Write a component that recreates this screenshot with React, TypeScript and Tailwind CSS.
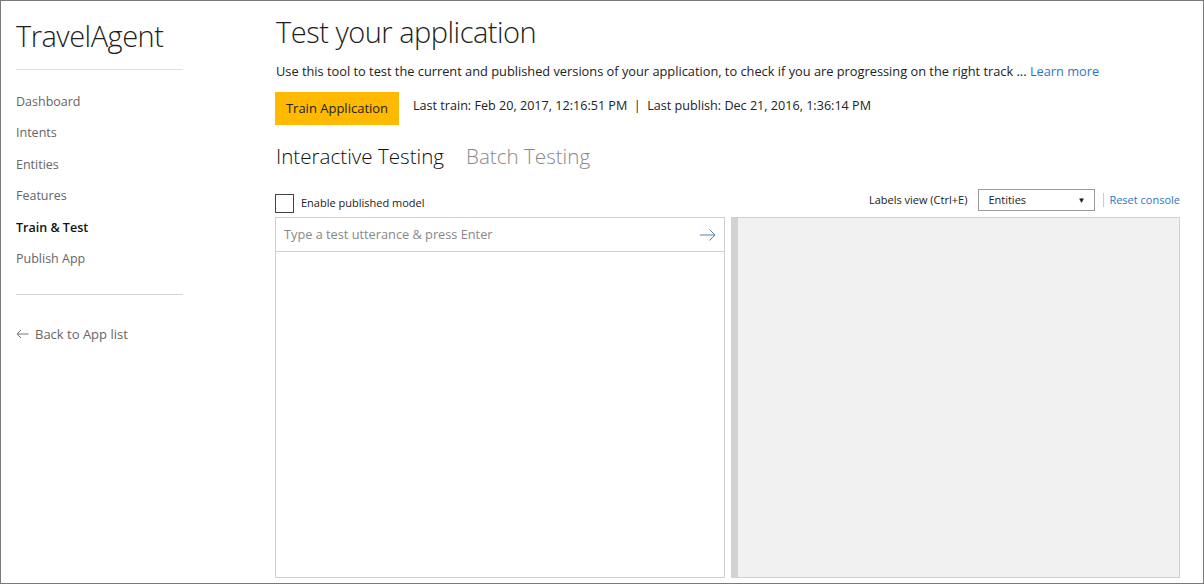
import { useState } from "react";

const navItems = ["Dashboard", "Intents", "Entities", "Features", "Train & Test", "Publish App"];

function Sidebar() {
  return (
    <aside className="w-[275px] shrink-0 pl-[15px]">
      <div className="w-[167px]">
        <h1 className="pt-[15px] h-[68px] text-[29px] font-light leading-[40px] text-[#1e1e1e] tracking-[-0.5px]">
          TravelAgent
        </h1>
        <div className="border-t border-[#e1e1e1]" />
        <nav className="pt-[22px] pb-[14px] flex flex-col">
          {navItems.map((item) => (
            <a
              key={item}
              className={
                item === "Train & Test"
                  ? "h-[31.4px] leading-[20px] text-[12.5px] font-semibold text-[#111]"
                  : "h-[31.4px] leading-[20px] text-[12.5px] text-[#666]"
              }
            >
              {item}
            </a>
          ))}
        </nav>
        <div className="border-t border-[#d4d4d4]" />
        <a className="mt-[29px] flex items-center gap-[6px] text-[13px] text-[#666] leading-[20px]">
          <svg width="13" height="10" viewBox="0 0 13 10" fill="none" stroke="#777" strokeWidth="1">
            <path d="M12.5 5H1M5 1L1 5l4 4" />
          </svg>
          Back to App list
        </a>
      </div>
    </aside>
  );
}

function Toolbar() {
  const [checked, setChecked] = useState(false);
  return (
    <div className="flex items-end justify-between h-[46px] pb-[4px] pr-[23px] -ml-px">
      <label className="flex items-center gap-[7px] text-[11px] text-[#222]">
        <span
          onClick={() => setChecked(!checked)}
          className="w-[19px] h-[19px] border border-[#444] bg-white"
        />
        Enable published model
      </label>
      <div className="flex items-center text-[11px] text-[#222] mb-[2px]">
        <span className="mr-[11px]">Labels view (Ctrl+E)</span>
        <div className="w-[117px] h-[22px] border border-[#999] flex items-center justify-between px-[9px] text-[11px]">
          <span>Entities</span>
          <span className="text-[8px]">▼</span>
        </div>
        <span className="ml-[8px] mr-[5px] h-[14px] border-l border-[#ccc]" />
        <a className="text-[#2f74c6]">Reset console</a>
      </div>
    </div>
  );
}

export default function App() {
  return (
    <div
      className="w-[1204px] h-[584px] border border-[#7a7a7a] bg-white flex overflow-hidden"
      style={{ fontFamily: '"Open Sans", "Noto Sans", Arial, sans-serif' }}
    >
      <Sidebar />
      <main className="flex-1 flex flex-col">
        <h2 className="pt-[11px] text-[29px] font-light leading-[40px] text-[#1e1e1e] tracking-[-0.5px]">
          Test your application
        </h2>
        <p className="mt-[10px] text-[12.8px] leading-[18px] text-[#222]">
          Use this tool to test the current and published versions of your application, to check if you are progressing on the right track ...{" "}
          <a className="text-[#2f74c6]">Learn more</a>
        </p>
        <div className="mt-[12px] flex items-center">
          <button className="-ml-px w-[124px] h-[33px] bg-[#ffb900] text-[13px] text-[#222]">
            Train Application
          </button>
          <span className="ml-[14px] text-[12.6px] text-[#222] -mt-[5px]">
            Last train: Feb 20, 2017, 12:16:51 PM&nbsp;&nbsp;|&nbsp;&nbsp;Last publish: Dec 21, 2016, 1:36:14 PM
          </span>
        </div>
        <div className="mt-[16px] flex gap-[22px] text-[20.6px] font-light leading-[30px]">
          <span className="text-[#111]">Interactive Testing</span>
          <span className="text-[#888]">Batch Testing</span>
        </div>
        <Toolbar />
        <div className="flex gap-[6px] h-[361px] pr-[23px] -ml-px">
          <section className="flex-1 border border-[#d0d0d0] flex flex-col">
            <div className="h-[34px] border-b border-[#d0d0d0] flex items-center justify-between pl-[8px] pr-[8px]">
              <span className="text-[12.75px] text-[#888]">Type a test utterance &amp; press Enter</span>
              <svg width="16" height="12" viewBox="0 0 16 12" fill="none" stroke="#5b7fc0" strokeWidth="1">
                <path d="M0 6h15M9.5 0.5L15 6l-5.5 5.5" />
              </svg>
            </div>
          </section>
          <section className="flex-1 flex border border-[#d0d0d0] border-l-0">
            <div className="w-[7px] bg-[#d2d2d2]" />
            <div className="flex-1 bg-[#f1f1f1]" />
          </section>
        </div>
      </main>
    </div>
  );
}
